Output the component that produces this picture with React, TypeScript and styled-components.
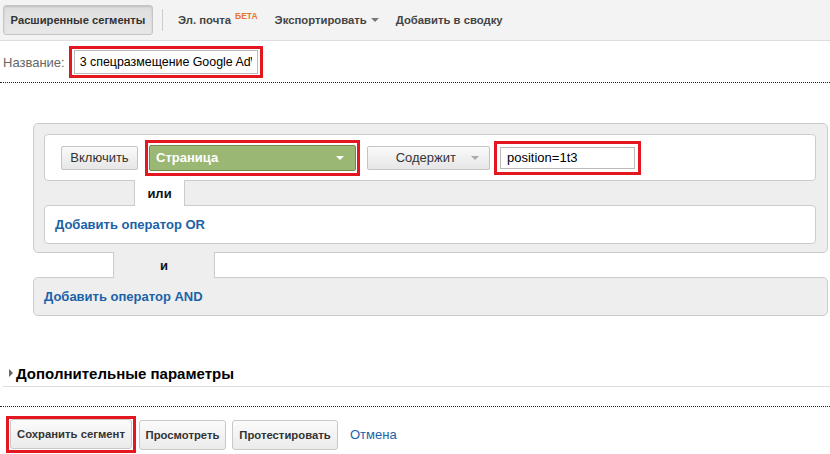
import styled, { createGlobalStyle } from "styled-components";

const GlobalStyle = createGlobalStyle`
  html, body {
    margin: 0;
    padding: 0;
    background: #fff;
    font-family: "Liberation Sans", Arial, sans-serif;
    color: #222;
  }
`;

interface ITabProps {
  $bg: string;
  $offset: number;
  $width: number;
}

interface IRedBoxProps {
  $pad: string;
}

const App = () => {
  return (
    <Page>
      <GlobalStyle />
      <Toolbar>
        <ToolButton>Расширенные сегменты</ToolButton>
        <ToolSeparator />
        <ToolLink $space={17}>
          Эл. почта<Beta>БЕТА</Beta>
        </ToolLink>
        <ToolLink $space={17}>
          Экспортировать
          <SmallArrow $color="#777" />
        </ToolLink>
        <ToolLink $space={0}>Добавить в сводку</ToolLink>
      </Toolbar>

      <NameRow>
        <NameLabel>Название:</NameLabel>
        <RedBox $pad="1px 2px">
          <NameInput readOnly value="3 спецразмещение Google AdWords" />
        </RedBox>
      </NameRow>
      <DottedLine />

      <Builder>
        <OrGroup>
          <ConditionCard>
            <GreyButton>Включить</GreyButton>
            <RedBox $pad="2px 1px">
              <GreenSelect>
                Страница
                <SmallArrow $color="#fff" />
              </GreenSelect>
            </RedBox>
            <MatchButton>
              <MatchLabel>Содержит</MatchLabel>
              <SmallArrow $color="#aaa" />
            </MatchButton>
            <RedBox $pad="3px">
              <ValueInput readOnly value="position=1t3" />
            </RedBox>
          </ConditionCard>
          <TabRow>
            <Tab $bg="#fff" $offset={90} $width={51}>
              или
            </Tab>
          </TabRow>
          <LinkCard>
            <BlueLink>Добавить оператор OR</BlueLink>
          </LinkCard>
        </OrGroup>
        <TabRow>
          <Tab $bg="#eee" $offset={80} $width={102}>
            и
          </Tab>
        </TabRow>
        <AndBox>
          <BlueLink>Добавить оператор AND</BlueLink>
        </AndBox>
      </Builder>

      <Advanced>
        <RightArrow />
        Дополнительные параметры
      </Advanced>
      <SolidRule />
      <DottedLine />

      <Actions>
        <RedBox $pad="0 1px 1px 1px">
          <ActionButton $width={122}>Сохранить сегмент</ActionButton>
        </RedBox>
        <ActionButton $width={87}>Просмотреть</ActionButton>
        <ActionButton $width={106} $gap={6}>
          Протестировать
        </ActionButton>
        <CancelLink>Отмена</CancelLink>
      </Actions>
    </Page>
  );
};

export default App;

const Page = styled.div`
  width: 830px;
  height: 454px;
  overflow: hidden;
`;

const Toolbar = styled.div`
  height: 40px;
  display: flex;
  align-items: center;
  padding-left: 3px;
  background: #f3f3f3;
  border-bottom: 1px solid #dedede;
`;

const ToolButton = styled.div`
  box-sizing: border-box;
  width: 150px;
  height: 30px;
  display: flex;
  align-items: center;
  justify-content: center;
  font-size: 11.2px;
  font-weight: bold;
  color: #333;
  background: linear-gradient(#dedede, #e8e8e8);
  border: 1px solid #c6c6c6;
  border-radius: 3px;
  box-shadow: inset 0 1px 2px rgba(0, 0, 0, 0.15);
`;

const ToolSeparator = styled.div`
  width: 1px;
  height: 22px;
  background: #ccc;
  margin: 0 15px 0 9px;
`;

const ToolLink = styled.div<{ $space: number }>`
  display: flex;
  align-items: center;
  font-size: 11.3px;
  font-weight: bold;
  color: #444;
  margin-right: ${(p) => p.$space}px;
  white-space: pre;
`;

const Beta = styled.sup`
  font-size: 8.5px;
  color: #e8742c;
  margin-left: 4px;
  align-self: flex-start;
  margin-top: -3px;
`;

const SmallArrow = styled.span<{ $color: string }>`
  display: inline-block;
  width: 0;
  height: 0;
  margin-left: 4px;
  border-left: 4px solid transparent;
  border-right: 4px solid transparent;
  border-top: 4px solid ${(p) => p.$color};
`;

const NameRow = styled.div`
  height: 41px;
  display: flex;
  align-items: center;
  padding-left: 3px;
  padding-top: 1px;
  box-sizing: border-box;
`;

const NameLabel = styled.span`
  font-size: 13px;
  color: #666;
  margin-right: 4px;
`;

const RedBox = styled.div<IRedBoxProps>`
  display: flex;
  border: 3px solid #e3171f;
  padding: ${(p) => p.$pad};
`;

const NameInput = styled.input`
  box-sizing: border-box;
  width: 184px;
  height: 24px;
  border: 1px solid #bbb;
  padding: 0 5px;
  font-family: "Liberation Sans", Arial, sans-serif;
  font-size: 12.4px;
  color: #000;
  outline: none;
`;

const DottedLine = styled.div`
  border-top: 1px dotted #222;
`;

const Builder = styled.div`
  margin: 40px 2px 0 33px;
`;

const OrGroup = styled.div`
  background: #eee;
  border: 1px solid #ccc;
  border-radius: 5px;
  padding: 10px 11px 8px 10px;
`;

const ConditionCard = styled.div`
  box-sizing: border-box;
  height: 47px;
  display: flex;
  align-items: center;
  gap: 7px;
  padding-left: 16px;
  background: #fff;
  border: 1px solid #ccc;
  border-radius: 4px;
`;

const GreyButton = styled.div`
  box-sizing: border-box;
  height: 24px;
  width: 77px;
  display: flex;
  align-items: center;
  justify-content: center;
  font-size: 13px;
  color: #333;
  background: linear-gradient(#fafafa, #e6e6e6);
  border: 1px solid #c4c4c4;
  border-radius: 2px;
`;

const MatchButton = styled(GreyButton)`
  width: 123px;
  justify-content: flex-end;
  padding-right: 10px;
  margin-right: -3px;
`;

const MatchLabel = styled.span`
  margin-right: 11px;
`;

const GreenSelect = styled.div`
  box-sizing: border-box;
  width: 207px;
  height: 26px;
  display: flex;
  align-items: center;
  justify-content: space-between;
  padding: 0 11px 0 6px;
  font-size: 13px;
  font-weight: bold;
  color: #fff;
  background: #9bb774;
  border: 1px solid #6f8e4c;
  border-radius: 2px;
`;

const ValueInput = styled.input`
  box-sizing: border-box;
  width: 135px;
  height: 22px;
  border: 1px solid #bbb;
  padding: 0 6px;
  font-family: "Liberation Sans", Arial, sans-serif;
  font-size: 13px;
  color: #000;
  outline: none;
`;

const TabRow = styled.div`
  height: 24px;
  display: flex;
`;

const Tab = styled.div<ITabProps>`
  position: relative;
  z-index: 1;
  box-sizing: border-box;
  height: 26px;
  margin: -1px 0 -1px ${(p) => p.$offset}px;
  width: ${(p) => p.$width}px;
  display: flex;
  align-items: center;
  justify-content: center;
  font-size: 13px;
  font-weight: bold;
  color: #111;
  background: ${(p) => p.$bg};
  border-left: 1px solid #ccc;
  border-right: 1px solid #ccc;
`;

const LinkCard = styled.div`
  box-sizing: border-box;
  height: 39px;
  display: flex;
  align-items: center;
  padding-left: 10px;
  background: #fff;
  border: 1px solid #ccc;
  border-radius: 4px;
`;

const AndBox = styled(LinkCard)`
  background: #eee;
  border-radius: 5px;
`;

const BlueLink = styled.span`
  font-size: 13px;
  font-weight: bold;
  color: #1b62a8;
`;

const Advanced = styled.div`
  display: flex;
  align-items: center;
  margin-top: 46px;
  height: 22px;
  padding-left: 9px;
  font-size: 15px;
  font-weight: bold;
  color: #000;
`;

const RightArrow = styled.span`
  width: 0;
  height: 0;
  margin-right: 3px;
  border-top: 4px solid transparent;
  border-bottom: 4px solid transparent;
  border-left: 4px solid #666;
`;

const SolidRule = styled.div`
  margin: 2px 0 19px 3px;
  border-top: 1px solid #ddd;
`;

const Actions = styled.div`
  display: flex;
  align-items: center;
  gap: 3px;
  margin-top: 9px;
  padding-left: 6px;
`;

const ActionButton = styled.div<{ $width: number; $gap?: number }>`
  box-sizing: border-box;
  width: ${(p) => p.$width}px;
  height: 30px;
  margin-left: ${(p) => (p.$gap ? p.$gap - 3 : 0)}px;
  display: flex;
  align-items: center;
  justify-content: center;
  font-size: 11.3px;
  font-weight: bold;
  color: #333;
  background: linear-gradient(#fbfbfb, #ebebeb);
  border: 1px solid #c8c8c8;
  border-radius: 3px;
`;

const CancelLink = styled.span`
  margin-left: 9px;
  font-size: 13px;
  color: #1b62a8;
`;
